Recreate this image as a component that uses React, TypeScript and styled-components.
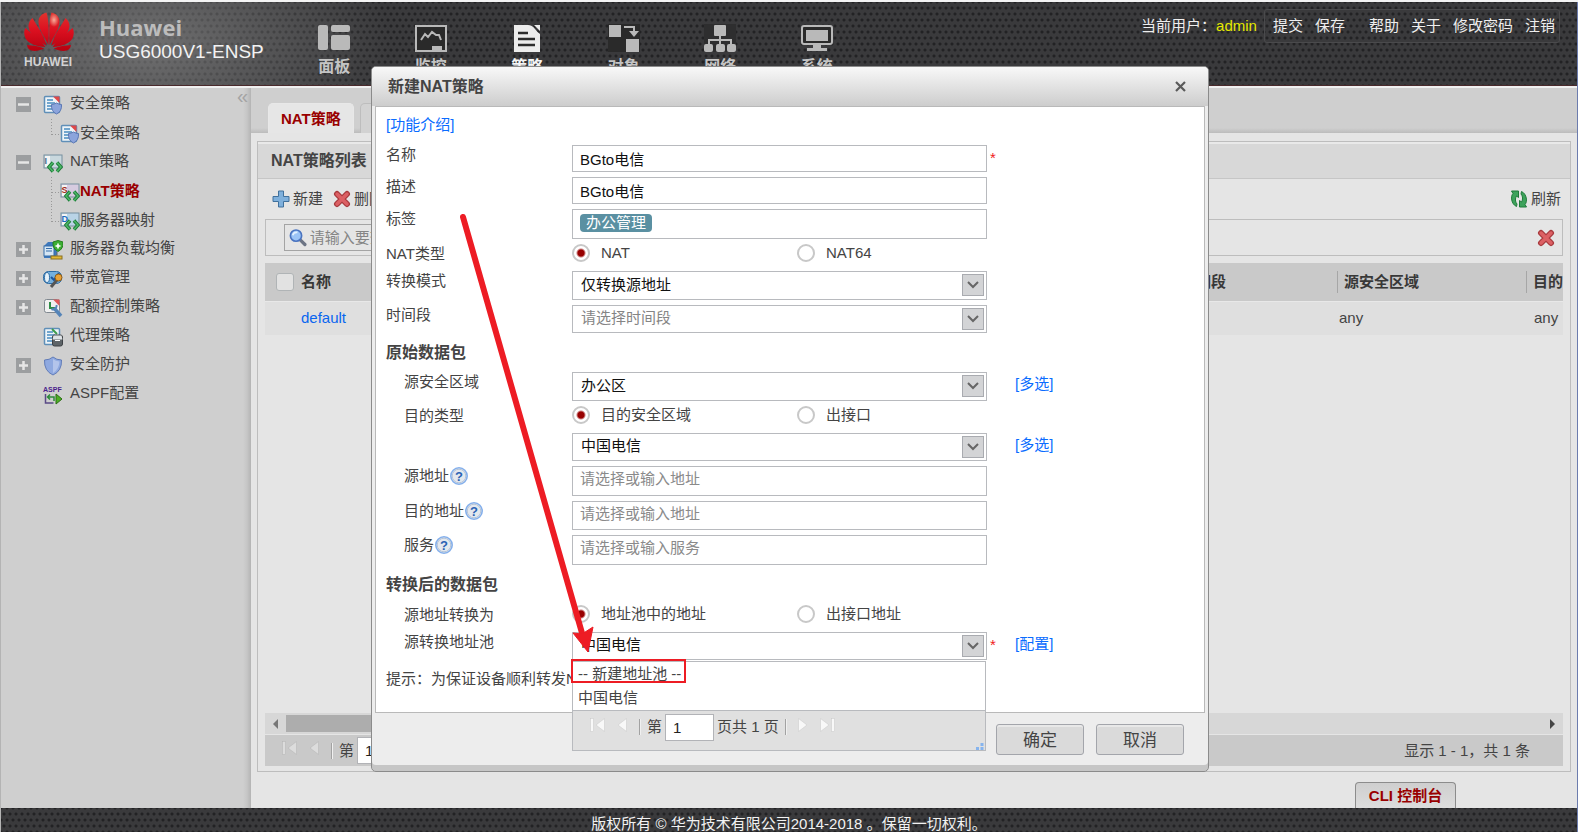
import React, { useState } from 'react';
import styled, { createGlobalStyle, css } from 'styled-components';

const GlobalStyle = createGlobalStyle`
  *, *::before, *::after { box-sizing: border-box; }
  body {
    margin: 0;
    background: #e5e5e5;
    color: #444;
    font: 15px/20px "Liberation Sans", "Noto Sans CJK SC", sans-serif;
  }
  button, input, select { font: inherit; color: inherit; margin: 0; }
  button { padding: 0; border: 0; background: none; cursor: pointer; }
  a { text-decoration: none; }
`;

const dots = css`
  background-image:
    radial-gradient(circle, #222224 1px, transparent 2px),
    radial-gradient(circle, #222224 1px, transparent 2px);
  background-size: 6px 12px;
  background-position: 0 0, 3px 6px;
`;

/* ---------- page frame ---------- */

const Page = styled.div`
  position: relative;
  display: flex;
  flex-direction: column;
  min-height: 100vh;
  border: solid #f4f4f4;
  border-width: 2px 0 0;
  box-shadow: inset 1px 0 #b4b4b4, inset -1px 0 #6c7cae;
`;

const Header = styled.header`
  display: flex;
  height: 84px;
  margin: 0 1px;
  padding-left: 23px;
  background-color: #3a3a3c;
  border-bottom: 1px solid #4a2a2c;
  background-image:
    radial-gradient(ellipse 250px 130px at 140px 50%, rgba(150, 150, 150, 0.6), transparent),
    radial-gradient(circle, #222224 1px, transparent 2px),
    radial-gradient(circle, #222224 1px, transparent 2px);
  background-size: 100% 100%, 6px 12px, 6px 12px;
  background-position: 0 0, 0 0, 3px 6px;
`;

const Brand = styled.div`
  display: flex;
  width: 262px;
  padding-top: 10px;
  gap: 24px;
`;

const Logo = styled.div`
  width: 51px;
  color: #d2d2d2;
  font-size: 12px;
  font-weight: bold;
  line-height: 14px;
  svg { display: block; }
`;

const Product = styled.div`
  padding-top: 2px;
  color: #f2f2f2;
  font-size: 19px;
  line-height: 24px;
  white-space: nowrap;
  strong {
    display: block;
    color: #bcbcbc;
    font: bold 22px/26px "Open Sans", sans-serif;
  }
`;

const MainNav = styled.nav`
  display: grid;
  grid-template-columns: repeat(6, 1fr);
  width: 579px;
  padding-top: 22px;
`;

const NavItem = styled.a<{ $active?: boolean }>`
  display: flex;
  flex-direction: column;
  align-items: center;
  gap: 3px;
  color: ${(p) => (p.$active ? '#f4f4f4' : '#c4c4c4')};
  font-size: 16px;
  font-weight: bold;
  line-height: 24px;
  svg { display: block; }
`;

const UserBar = styled.div`
  display: flex;
  align-items: flex-start;
  margin-left: auto;
  padding: 7px 17px 0 0;
  color: #eee;
  line-height: 34px;
  white-space: nowrap;
  em { margin: 0 7px 0 0; color: #e5e800; font-style: normal; }
`;

const UserLinks = styled.div`
  display: flex;
  height: 34px;
  padding: 0 4px 0 8px;
  gap: 12px;
  border: 1px solid #4a4a4c;
  border-radius: 3px;
  line-height: 32px;
  a { color: #eee; }
  a:nth-child(3) { margin-left: 12px; }
`;

const Main = styled.div`
  display: flex;
  flex: 1;
  margin: 0 1px;
  border-top: 2px solid #f0f0f0;
`;

const Footer = styled.footer`
  height: 24px;
  margin: 0 1px;
  padding-top: 7px;
  background-color: #3a3a3c;
  ${dots}
  color: #f2f2f2;
  line-height: 17px;
  text-align: center;
`;

/* ---------- sidebar ---------- */

const Sidebar = styled.aside`
  position: relative;
  width: 250px;
  flex: none;
  padding-top: 2px;
  background: linear-gradient(to left, #b4b4b4, #c6c6c6 4px, #cfcfcf 8px);
`;

const Collapse = styled.button`
  position: absolute;
  top: 0;
  right: 3px;
  color: #a4a4a4;
  font-size: 20px;
  line-height: 16px;
`;

const Tree = styled.ul`
  margin: 0;
  padding: 0;
  list-style: none;
`;

const TreeRow = styled.li<{ $sub?: boolean; $active?: boolean }>`
  display: flex;
  align-items: center;
  height: 29px;
  padding-left: ${(p) => (p.$sub ? 49 : 15)}px;
  svg { flex: none; }
  a {
    margin-left: ${(p) => (p.$sub ? 0 : 7)}px;
    padding-bottom: ${(p) => (p.$sub ? 2 : 4)}px;
    color: ${(p) => (p.$active ? '#990000' : '#444')};
    font-weight: ${(p) => (p.$active ? 'bold' : 'normal')};
  }
`;

const Toggle = styled.button<{ $hidden?: boolean }>`
  width: 15px;
  height: 15px;
  margin-right: 12px;
  background: #9c9ea0;
  visibility: ${(p) => (p.$hidden ? 'hidden' : 'visible')};
  svg { display: block; }
`;

/* ---------- content ---------- */

const Content = styled.main`
  display: flex;
  flex: 1;
  flex-direction: column;
  min-width: 0;
`;

const Tabs = styled.div`
  display: flex;
  align-items: flex-end;
  height: 45px;
  padding-left: 17px;
  gap: 6px;
  background: linear-gradient(to top, #bcbcbc, #cfcfcf 5px);
`;

const Tab = styled.button<{ $active?: boolean }>`
  height: 30px;
  padding: 0 12px;
  border: 1px solid ${(p) => (p.$active ? '#e8e8e8' : '#bdbdbd')};
  border-bottom: 0;
  border-radius: 5px 5px 0 0;
  background: ${(p) => (p.$active ? '#e6e6e6' : '#d2d2d2')};
  color: ${(p) => (p.$active ? '#990000' : '#444')};
  font-weight: bold;
`;

const Panel = styled.section`
  display: flex;
  flex: 1;
  flex-direction: column;
  margin: 8px 6px 0;
  border: 1px solid #bdbdbd;
  box-shadow: inset 0 2px #e9e9e9;
`;

const PanelTitle = styled.h2`
  margin: 2px 0 0;
  padding-left: 13px;
  border-bottom: 1px solid #c6c6c6;
  background: #d8d8d8;
  font-size: 16px;
  line-height: 34px;
`;

const PanelBody = styled.div`
  display: flex;
  flex: 1;
  flex-direction: column;
  padding: 0 7px 5px;
`;

const Toolbar = styled.div`
  display: flex;
  align-items: center;
  height: 40px;
  padding: 0 2px 0 7px;
  gap: 10px;
`;

const ToolButton = styled.button<{ $right?: boolean }>`
  display: flex;
  align-items: center;
  gap: 3px;
  margin-left: ${(p) => (p.$right ? 'auto' : 0)};
`;

const SearchRow = styled.div`
  display: flex;
  align-items: center;
  justify-content: space-between;
  height: 37px;
  margin-bottom: 7px;
  padding: 0 7px 0 18px;
  border: 1px solid #bdbdbd;
`;

const SearchBox = styled.label`
  display: flex;
  align-items: center;
  width: 300px;
  height: 27px;
  padding-left: 4px;
  gap: 1px;
  border: 1px solid #a4a4a4;
  input {
    width: 100%;
    border: 0;
    outline: 0;
    background: none;
  }
  input::placeholder { color: #858585; opacity: 1; }
`;

const GridArea = styled.div`
  flex: 1;
  overflow: hidden;
`;

const Grid = styled.table`
  width: calc(100% + 152px);
  border-collapse: collapse;
  table-layout: fixed;
  text-align: left;
  thead tr { height: 38px; background: #c9c9c9; border-bottom: 1px solid #e8e8e8; }
  tbody tr { height: 34px; background: #dfdfdf; }
  th { padding: 0; font-weight: bold; white-space: nowrap; color: #383838; }
  th:first-child { width: 36px; }
  th:nth-child(3) { width: 163px; }
  th:nth-child(n + 4) { width: 189px; }
  td { padding: 0 0 0 2px; }
  td:nth-child(2) { padding-left: 0; }
  td:last-child { padding-left: 8px; }
  a { color: #0a66f0; }
`;

const HeadCell = styled.div<{ $rule?: boolean }>`
  padding-left: ${(p) => (p.$rule ? 6 : 0)}px;
  border-left: ${(p) => (p.$rule ? '1px solid #a6a6a6' : '0')};
  line-height: 22px;
`;

const CheckBox = styled.input`
  display: block;
  appearance: none;
  width: 18px;
  height: 18px;
  margin-left: 11px;
  border: 1px solid #b0b4b6;
  border-radius: 3px;
  background: #e2e2e2;
`;

const ScrollTrack = styled.div`
  display: flex;
  align-items: center;
  height: 21px;
  margin-bottom: 1px;
  padding: 0 7px;
  background: #d7d7d7;
`;

const ScrollThumb = styled.div`
  width: 70%;
  height: 17px;
  margin: 0 auto 0 8px;
  background: #adadad;
`;

const Pager = styled.div<{ $inDialog?: boolean }>`
  display: flex;
  align-items: center;
  height: ${(p) => (p.$inDialog ? 32 : 31)}px;
  padding: 0 33px 0 17px;
  background: ${(p) => (p.$inDialog ? 'transparent' : '#c9c9c9')};
  white-space: nowrap;
  button { display: flex; margin-right: 12px; padding-bottom: 5px; }
`;

const Separator = styled.span<{ $after?: boolean }>`
  width: 2px;
  height: 16px;
  margin: ${(p) => (p.$after ? '0 11px 0 6px' : '0 6px 0 0')};
  border-left: 1px solid #a2a2a2;
  border-right: 1px solid #f0f0f0;
`;

const PageInput = styled.input`
  width: 49px;
  height: 27px;
  margin: 0 3px;
  padding: 0 7px;
  border: 1px solid #b2b3b7;
  background: #fff;
  color: #222;
`;

const Total = styled.span`
  margin-left: auto;
`;

const ConsoleBar = styled.div`
  display: flex;
  justify-content: flex-end;
  height: 36px;
  padding: 10px 121px 0 0;
`;

const ConsoleTab = styled.button`
  width: 101px;
  border: 1px solid #8c8c8c;
  border-bottom: 0;
  border-radius: 4px 4px 0 0;
  background: linear-gradient(#cfcfcf, #dcdcdc);
  color: #990000;
  font-weight: bold;
`;

/* ---------- dialog ---------- */

const Overlay = styled.div`
  position: absolute;
  inset: 64px 0 auto 2px;
  display: flex;
  justify-content: center;
  pointer-events: none;
`;

const Dialog = styled.section`
  position: relative;
  width: 838px;
  border: 1px solid #8b8b8b;
  border-radius: 5px;
  background: #ededed;
  box-shadow: inset 0 -6px #c6c6c6;
  pointer-events: auto;
`;

const DialogHead = styled.header`
  display: flex;
  align-items: center;
  justify-content: space-between;
  height: 39px;
  padding: 0 22px 0 16px;
  border-radius: 4px 4px 0 0;
  background: linear-gradient(#f8f8f8, #cdcdcd);
  h2 { margin: 0; font-size: 16px; }
  button { display: flex; }
`;

const DialogBody = styled.form`
  margin: 0 3px;
  padding: 0 0 19px 10px;
  border: 1px solid #b9b9b9;
  background: #fff;
`;

const Intro = styled.p`
  margin: 0;
  height: 38px;
  line-height: 36px;
`;

const BlueLink = styled.a`
  color: #0a6cff;
`;

const Row = styled.div<{ $h: number }>`
  display: grid;
  grid-template-columns: 186px 415px 28px auto;
  align-items: start;
  height: ${(p) => p.$h}px;
  margin-bottom: 5px;
  ${BlueLink} { line-height: 24px; }
`;

const Label = styled.label<{ $indent?: boolean }>`
  display: flex;
  align-items: center;
  padding-left: ${(p) => (p.$indent ? 18 : 0)}px;
  line-height: 20px;
`;

const SectionTitle = styled.h3<{ $h: number }>`
  height: ${(p) => p.$h}px;
  margin: 0 0 5px;
  font-size: 16px;
  line-height: 30px;
`;

const fieldBox = css`
  width: 100%;
  height: 100%;
  border: 1px solid #b8babe;
  border-radius: 0;
  background: #fff;
  color: #111;
`;

const TextField = styled.input<{ $raised?: boolean }>`
  ${fieldBox}
  padding: 0 7px ${(p) => (p.$raised ? 5 : 0)}px;
  &::placeholder { color: #8a8a8a; opacity: 1; }
`;

const TagField = styled.div`
  ${fieldBox}
  padding: 4px 7px;
`;

const Tag = styled.span`
  display: block;
  width: fit-content;
  height: 18px;
  padding: 0 6px;
  border-radius: 4px;
  background: #5a90a2;
  color: #fff;
  line-height: 17px;
`;

const SelectWrap = styled.div`
  position: relative;
  height: 100%;
`;

const SelectField = styled.select<{ $empty?: boolean }>`
  ${fieldBox}
  appearance: none;
  padding: 0 30px 2px 8px;
  color: ${(p) => (p.$empty ? '#858585' : '#111')};
`;

const Chevron = styled.span`
  position: absolute;
  top: 3px;
  right: 3px;
  display: flex;
  align-items: center;
  justify-content: center;
  width: 22px;
  height: 22px;
  border: 1px solid #a9abb0;
  background: #d3d4d6;
  pointer-events: none;
`;

const RadioGroup = styled.div`
  display: grid;
  grid-template-columns: 225px auto;
  label {
    display: flex;
    align-items: center;
    height: 18px;
    gap: 11px;
  }
`;

const RadioInput = styled.input`
  appearance: none;
  width: 18px;
  height: 18px;
  border: 2px solid #c8c8c8;
  border-radius: 50%;
  background: #fff;
  &:checked { background: radial-gradient(circle, #980000 3px, #fff 5px); }
`;

const Required = styled.span`
  padding: 3px 0 0 3px;
  color: #f02020;
  font-size: 15px;
`;

const Hint = styled.p`
  margin: 0;
  line-height: 28px;
`;

const Popup = styled.div`
  position: absolute;
  top: 29px;
  left: 0;
  right: 1px;
  border: 1px solid #b8babe;
  background: #e0e0e0;
`;

const Options = styled.ul`
  margin: 0;
  padding: 0;
  border-bottom: 1px solid #b8babe;
  background: #fff;
  list-style: none;
`;

const Option = styled.li<{ $marked?: boolean }>`
  position: relative;
  height: 24px;
  padding-left: 5px;
  line-height: 23px;
  ${(p) =>
    p.$marked &&
    css`
      &::after {
        content: "";
        position: absolute;
        top: -3px;
        left: -2px;
        width: 115px;
        height: 24px;
        border: 2px solid #ed1c24;
      }
    `}
`;

const Grip = styled.div`
  display: flex;
  align-items: flex-end;
  justify-content: flex-end;
  height: 7px;
  padding-right: 1px;
  svg { display: block; }
`;

const Actions = styled.footer`
  display: flex;
  justify-content: flex-end;
  height: 58px;
  padding: 11px 24px 0 0;
  gap: 12px;
`;

const ActionButton = styled.button`
  width: 88px;
  height: 31px;
  padding-top: 2px;
  border: 1px solid #a3a5ab;
  border-radius: 3px;
  background: #dadada;
  box-shadow: inset 0 2px #e8e8e8;
  font-size: 17px;
`;

const Pointer = styled.svg`
  position: absolute;
  top: 144px;
  left: 83px;
  pointer-events: none;
`;

/* ---------- drawings ---------- */

const HuaweiMark = () => {
  const half = (
    <>
      <path d="M24.400 33C20 24 14.500 17 14.500 9.500C14.500 5 18 1.500 22.500.5C25 8 25 22 24.400 33Z" />
      <path d="M22.600 33.500C14 29 5 22 4.500 14.500C4.300 11 6 8 8.500 6C13 14 20 23 22.600 33.500Z" />
      <path d="M21.300 35C13 34.500 4 32 1.300 26C-.3 22 0 18.500 1.500 16C8 22 17 27 21.300 35Z" />
      <path d="M20.200 36.500C15 39 8 40 5 37.200C3.800 36 3.200 34.500 3 33C9 33.500 15 34 20.200 36.500Z" />
    </>
  );
  return (
    <svg width="50" height="43" viewBox="0 0 50 43">
      <defs>
        <linearGradient id="petal" x1="0" y1="0" x2="0" y2="40" gradientUnits="userSpaceOnUse">
          <stop offset="0" stopColor="#e0342e" />
          <stop offset="0.450" stopColor="#dc1020" />
          <stop offset="1" stopColor="#b4000f" />
        </linearGradient>
        <radialGradient id="shine">
          <stop offset="0" stopColor="#ffd0b8" stopOpacity="0.800" />
          <stop offset="1" stopColor="#ffd0b8" stopOpacity="0" />
        </radialGradient>
      </defs>
      <g fill="url(#petal)">
        {half}
        <g transform="translate(50 0) scale(-1 1)">{half}</g>
      </g>
      <ellipse cx="30" cy="8" rx="5" ry="7" fill="url(#shine)" />
    </svg>
  );
};

const navIcons: Record<string, React.ReactNode> = {
  board: (
    <g fill="#b9b9b9">
      <rect x="0" y="1" width="10" height="25" rx="2" />
      <rect x="13" y="1" width="19" height="7" rx="2" />
      <rect x="13" y="11" width="19" height="15" rx="2" />
    </g>
  ),
  monitor: (
    <g fill="none" stroke="#b9b9b9" strokeWidth="2">
      <rect x="1" y="2" width="30" height="25" fill="#2a2a2a" />
      <path d="M6 16l4-6 3 3 4-5 4 3 3 0 2 5" />
      <path d="M18 26v-3h8v3z" fill="#b9b9b9" />
    </g>
  ),
  policy: (
    <>
      <path d="M3 1h14q4 0 7 4 3 4 5 5v18H3z" fill="#ececec" />
      <path d="M23 1h6v6z" fill="#ececec" />
      <path d="M7 9h10M7 15h17M7 21h17" stroke="#2c2c2c" strokeWidth="2.500" />
    </>
  ),
  object: (
    <g fill="#b9b9b9">
      <rect x="0" y="0" width="32" height="28" fill="#2a2a2a" />
      <rect x="1" y="1" width="12" height="12" />
      <rect x="18" y="15" width="13" height="13" />
      <path d="M16 3h10v6" fill="none" stroke="#b9b9b9" strokeWidth="2" />
      <path d="M21 7h10l-5 6z" />
    </g>
  ),
  network: (
    <g fill="#b9b9b9">
      <rect x="0" y="0" width="32" height="28" fill="#2e2e2f" />
      <rect x="10" y="1" width="12" height="11" rx="1" />
      <path d="M16 12v8M5 21v-5h22v5" fill="none" stroke="#b9b9b9" strokeWidth="2" />
      <rect x="0" y="20" width="9" height="8" rx="2" />
      <rect x="12" y="20" width="9" height="8" rx="2" />
      <rect x="23" y="20" width="9" height="8" rx="2" />
    </g>
  ),
  system: (
    <g fill="#b9b9b9">
      <rect x="1" y="2" width="30" height="18" rx="2" fill="#2a2a2a" stroke="#b9b9b9" strokeWidth="2" />
      <rect x="5" y="6" width="22" height="11" />
      <path d="M12 20h8v4h6v3H6v-3h6z" />
    </g>
  ),
};

const docBase = (
  <>
    <rect x="1.500" y="1.500" width="15" height="16" rx="1" fill="#eef4f8" stroke="#5f8fb8" strokeWidth="1.500" />
    <path d="M4 5h6M4 8h8M4 11h7M4 14h5" stroke="#4a8cc0" strokeWidth="1.300" />
  </>
);
const shieldSmall = (
  <path d="M8.500 9.500q2.500 0 5-1.500 2.500 1.500 5 1.500 .5 7-5 9.500-5.500-2.500-5-9.500z" fill="#8ba4dc" stroke="#5a76b4" />
);
const greenArrows = (
  <>
    <path d="M10 9.500l-4 4.500 4 4.500M14 9.500l4 4.500-4 4.500" fill="none" stroke="#1f7a38" strokeWidth="3.400" />
    <path d="M10 9.500l-4 4.500 4 4.500M14 9.500l4 4.500-4 4.500" fill="none" stroke="#4cb868" strokeWidth="1.500" />
  </>
);
const natBase = (letter: string, color: string, fill: string) => (
  <>
    <rect x="1" y="2" width="18" height="13" fill={fill} stroke="#76909f" />
    <rect x="2" y="3" width="5" height="11" fill="#f5f5f5" />
    <text x="1.500" y="11" fontSize="9" fontWeight="bold" fill={color}>{letter}</text>
    {greenArrows}
  </>
);

const treeIcons: Record<string, React.ReactNode> = {
  policy: (
    <>
      {docBase}
      <path d="M10 1.500h6.500V8z" fill="#e04848" />
      {shieldSmall}
    </>
  ),
  nat: natBase('I', '#4a6c90', '#c9d8de'),
  natS: natBase('S', '#a02c1c', '#d6cbe0'),
  natD: natBase('D', '#1c6cc0', '#b9d3e6'),
  server: (
    <>
      <path d="M1 6l4-4h9v13l-3 3H1z" fill="#3e78bc" />
      <rect x="1" y="6" width="10" height="10" fill="#d6e6f4" stroke="#356ca8" />
      <path d="M3 8.500h6M3 11h6" stroke="#356ca8" />
      <path d="M10 2l5-1.500L20 2q.5 7-5 9.500-5.500-2.500-5-9.500z" fill="#3cae32" stroke="#267c20" />
      <path d="M15 3.500v5M12.500 6h5" stroke="#fff" strokeWidth="1.600" />
      <path d="M14 12v4" stroke="#666" />
      <rect x="8" y="16" width="11" height="3" fill="#e2b934" stroke="#8a7020" />
    </>
  ),
  bandwidth: (
    <>
      <rect x="0.500" y="2.500" width="18" height="12" rx="5" fill="#74b0de" stroke="#2e6ca4" />
      <ellipse cx="4" cy="8.500" rx="2.500" ry="5" fill="#e6f2fa" stroke="#2e6ca4" />
      <path d="M8 8l3 3 5-7" fill="none" stroke="#1c549c" strokeWidth="2" />
      <path d="M8 18l6-7" stroke="#555" strokeWidth="3" />
      <circle cx="15.500" cy="8.500" r="3.500" fill="#e8a238" stroke="#8a5a18" />
    </>
  ),
  quota: (
    <>
      <rect x="1.500" y="1.500" width="15" height="13" rx="2" fill="#f0f0f0" stroke="#808890" />
      <path d="M10 1.500h6.500V8z" fill="#e05858" />
      <path d="M7 4v6h5" fill="none" stroke="#2e8c46" strokeWidth="2" />
      <path d="M11 10l7 8" stroke="#5584b8" strokeWidth="3.500" />
      <path d="M8.500 11a3.500 3.500 0 0 0 5-4" fill="none" stroke="#5584b8" strokeWidth="2" />
    </>
  ),
  proxy: (
    <>
      {docBase}
      <path d="M9 2l5 5" stroke="#3c9c4c" strokeWidth="2" />
      <rect x="9.500" y="8" width="10" height="11" rx="2" fill="#5e6468" stroke="#3c4044" />
      <path d="M10.500 8.500h8l1 4h-10z" fill="#dfe3e6" />
      <path d="M12 13.500h5" stroke="#fff" />
    </>
  ),
  shield: (
    <>
      <path d="M1.500 4q5 0 8.500-3 3.500 3 8.500 3 .5 11-8.500 15-9-4-8.500-15z" fill="#8fa9e0" stroke="#617cb8" />
      <path d="M10 3v14q6-3.500 6.500-11.500-4-.3-6.500-2.500z" fill="#c2d0f0" opacity="0.700" />
    </>
  ),
  aspf: (
    <>
      <text x="0" y="7" fontSize="7" fontWeight="bold" fill="#4b1f8c">ASPF</text>
      <path d="M2.500 9v9h8" fill="none" stroke="#5a4a86" strokeWidth="1.500" />
      <path d="M5 12h6v4M7 9.500L4.500 12 7 14.500" fill="none" stroke="#2c8a3a" strokeWidth="1.500" />
      <path d="M13 9l6 5-6 5z" fill="#4cb022" stroke="#2c6c16" />
    </>
  ),
};

const TreeIcon = ({ name }: { name: string }) => (
  <svg width="20" height="20" viewBox="0 0 20 20">{treeIcons[name]}</svg>
);

const Branch = ({ last }: { last?: boolean }) => (
  <svg width="10" height="29">
    <path d={`M1.500 0V${last ? 16 : 29}M2 15.500H10`} fill="none" stroke="#999" strokeDasharray="1 2" />
  </svg>
);

const CrossIcon = () => (
  <svg width="18" height="18" viewBox="0 0 18 18">
    <path d="M4 4l10 10M14 4L4 14" stroke="#a83a3e" strokeWidth="6" strokeLinecap="round" />
    <path d="M4 4l10 10M14 4L4 14" stroke="#dc6064" strokeWidth="3.500" strokeLinecap="round" />
  </svg>
);

const PlusIcon = () => (
  <svg width="18" height="18" viewBox="0 0 18 18">
    <path d="M6.500 1h5v5.500H17v5h-5.500V17h-5v-5.500H1v-5h5.500z" fill="#7fb0dc" stroke="#40709c" strokeLinejoin="round" />
  </svg>
);

const RefreshIcon = () => (
  <svg width="18" height="18" viewBox="0 0 18 18">
    <g fill="#3ea35c" stroke="#1f7a3a" strokeLinejoin="round">
      <path d="M6.500 16.500C1 14 .5 6 3 3.500L1.500 1h7v6.500L6.500 6C5 8 5 12 7 14z" />
      <path d="M11.500 1.500C17 4 17.500 12 15 14.500l1.500 2.500h-7v-6.500l2 1.500C13 10 13 6 11 4z" />
    </g>
  </svg>
);

const SearchIcon = () => (
  <svg width="19" height="19" viewBox="0 0 19 19">
    <path d="M12 12l5 5" stroke="#6c7484" strokeWidth="3.500" strokeLinecap="round" />
    <circle cx="7.500" cy="7.500" r="6" fill="#9cc4f6" stroke="#4a74c0" strokeWidth="1.800" />
    <path d="M4 7q1-3.500 5-3" stroke="#e4f2ff" strokeWidth="1.800" fill="none" />
  </svg>
);

const HelpIcon = () => (
  <svg width="20" height="20" viewBox="0 0 20 20">
    <circle cx="10" cy="10" r="8.200" fill="#e4e8ee" stroke="#85b0ec" strokeWidth="1.600" />
    <circle cx="10" cy="10" r="6.800" fill="none" stroke="#b4c4d8" />
    <text x="10" y="14.500" fontSize="13" fontWeight="bold" fill="#2a62b4" textAnchor="middle">?</text>
  </svg>
);

const StepIcon = ({ end, flip, light }: { end?: boolean; flip?: boolean; light?: boolean }) => (
  <svg width={end ? 15 : 10} height="14" viewBox={end ? '0 0 15 14' : '5 0 10 14'}>
    <g
      fill={light ? '#f8f8f8' : '#dcdcdc'}
      stroke={light ? '#c8c8c8' : '#b4b4b4'}
      strokeWidth="0.500"
      transform={flip ? `translate(${end ? 15 : 20} 0) scale(-1 1)` : undefined}
    >
      {end && <rect x="0.500" y="0.500" width="3" height="13" />}
      <path d="M14.500 0.500v13L6 7z" />
    </g>
  </svg>
);

const ScrollArrow = ({ right }: { right?: boolean }) => (
  <svg width="6" height="10" viewBox="0 0 6 10">
    <path d={right ? 'M0 0l5 5-5 5z' : 'M6 0L1 5l5 5z'} fill={right ? '#444' : '#777'} />
  </svg>
);

/* ---------- data ---------- */

const NAV = [
  ['board', '面板'],
  ['monitor', '监控'],
  ['policy', '策略'],
  ['object', '对象'],
  ['network', '网络'],
  ['system', '系统'],
];

type Node = { icon: string; text: string; toggle?: 'plus' | 'minus'; sub?: boolean; last?: boolean; active?: boolean };

const NODES: Node[] = [
  { icon: 'policy', text: '安全策略', toggle: 'minus' },
  { icon: 'policy', text: '安全策略', sub: true, last: true },
  { icon: 'nat', text: 'NAT策略', toggle: 'minus' },
  { icon: 'natS', text: 'NAT策略', sub: true, active: true },
  { icon: 'natD', text: '服务器映射', sub: true, last: true },
  { icon: 'server', text: '服务器负载均衡', toggle: 'plus' },
  { icon: 'bandwidth', text: '带宽管理', toggle: 'plus' },
  { icon: 'quota', text: '配额控制策略', toggle: 'plus' },
  { icon: 'proxy', text: '代理策略' },
  { icon: 'shield', text: '安全防护', toggle: 'plus' },
  { icon: 'aspf', text: 'ASPF配置' },
];

/* ---------- form parts ---------- */

type RowProps = {
  id: string;
  h: number;
  label?: string;
  indent?: boolean;
  help?: boolean;
  required?: boolean;
  link?: string;
  children: React.ReactNode;
};

const FormRow = ({ id, h, label, indent, help, required, link, children }: RowProps) => (
  <Row $h={h}>
    <Label htmlFor={id} $indent={indent}>
      {label}
      {help && <HelpIcon />}
    </Label>
    {children}
    {required ? <Required>*</Required> : <span />}
    {link && <BlueLink href="#">{link}</BlueLink>}
  </Row>
);

type SelectProps = { id: string; value: string; empty?: boolean; label?: string; children?: React.ReactNode };

const Select = ({ id, value, empty, label, children }: SelectProps) => (
  <SelectWrap>
    <SelectField id={id} $empty={empty} aria-label={label}>
      <option>{value}</option>
    </SelectField>
    <Chevron>
      <svg width="12" height="8" viewBox="0 0 12 8">
        <path d="M1 1l5 5 5-5" fill="none" stroke="#666" strokeWidth="2" />
      </svg>
    </Chevron>
    {children}
  </SelectWrap>
);

const Radios = ({ id, options }: { id: string; options: [string, string] }) => {
  const [picked, setPicked] = useState(0);
  return (
    <RadioGroup>
      {options.map((text, i) => (
        <label key={text}>
          <RadioInput
            type="radio"
            id={i === 0 ? id : `${id}-${i}`}
            name={id}
            checked={picked === i}
            onChange={() => setPicked(i)}
          />
          {text}
        </label>
      ))}
    </RadioGroup>
  );
};

const PagerStart = ({ light }: { light?: boolean }) => (
  <>
    <button type="button" aria-label="首页"><StepIcon end light={light} /></button>
    <button type="button" aria-label="上一页"><StepIcon light={light} /></button>
    <Separator />
    第
    <PageInput defaultValue="1" aria-label="页码" />
    页共 1 页
  </>
);

const NatDialog = () => (
  <Overlay>
    <Dialog role="dialog" aria-labelledby="dialog-title">
      <DialogHead>
        <h2 id="dialog-title">新建NAT策略</h2>
        <button type="button" aria-label="关闭">
          <svg width="11" height="11" viewBox="0 0 11 11">
            <path d="M1 1l9 9M10 1l-9 9" stroke="#5a5a5a" strokeWidth="2.200" />
          </svg>
        </button>
      </DialogHead>
      <DialogBody>
        <Intro><BlueLink href="#">[功能介绍]</BlueLink></Intro>
        <FormRow id="name" h={27} label="名称" required>
          <TextField id="name" defaultValue="BGto电信" />
        </FormRow>
        <FormRow id="desc" h={27} label="描述">
          <TextField id="desc" defaultValue="BGto电信" />
        </FormRow>
        <FormRow id="tags" h={30} label="标签">
          <TagField id="tags"><Tag>办公管理</Tag></TagField>
        </FormRow>
        <FormRow id="nat-type" h={22} label="NAT类型">
          <Radios id="nat-type" options={['NAT', 'NAT64']} />
        </FormRow>
        <FormRow id="mode" h={29} label="转换模式">
          <Select id="mode" value="仅转换源地址" />
        </FormRow>
        <FormRow id="time" h={28} label="时间段">
          <Select id="time" value="请选择时间段" empty />
        </FormRow>
        <SectionTitle $h={29}>原始数据包</SectionTitle>
        <FormRow id="src-zone" h={29} label="源安全区域" indent link="[多选]">
          <Select id="src-zone" value="办公区" />
        </FormRow>
        <FormRow id="dst-type" h={22} label="目的类型" indent>
          <Radios id="dst-type" options={['目的安全区域', '出接口']} />
        </FormRow>
        <FormRow id="dst-zone" h={28} link="[多选]">
          <Select id="dst-zone" value="中国电信" label="目的安全区域" />
        </FormRow>
        <FormRow id="src-addr" h={30} label="源地址" indent help>
          <TextField id="src-addr" placeholder="请选择或输入地址" $raised />
        </FormRow>
        <FormRow id="dst-addr" h={29} label="目的地址" indent help>
          <TextField id="dst-addr" placeholder="请选择或输入地址" $raised />
        </FormRow>
        <FormRow id="service" h={30} label="服务" indent help>
          <TextField id="service" placeholder="请选择或输入服务" $raised />
        </FormRow>
        <SectionTitle $h={30}>转换后的数据包</SectionTitle>
        <FormRow id="src-to" h={22} label="源地址转换为" indent>
          <Radios id="src-to" options={['地址池中的地址', '出接口地址']} />
        </FormRow>
        <FormRow id="pool" h={28} label="源转换地址池" indent required link="[配置]">
          <Select id="pool" value="中国电信">
            <Popup>
              <Options>
                <Option $marked>-- 新建地址池 --</Option>
                <Option>中国电信</Option>
              </Options>
              <Pager $inDialog>
                <PagerStart light />
                <Separator $after />
                <button type="button" aria-label="下一页"><StepIcon flip light /></button>
                <button type="button" aria-label="末页"><StepIcon end flip light /></button>
              </Pager>
              <Grip>
                <svg width="8" height="7" viewBox="0 0 8 7" fill="#86b4ee">
                  <path d="M4.500 0h3v3h-3zM0 4h3v3H0zM4.500 4h3v3h-3z" />
                </svg>
              </Grip>
            </Popup>
          </Select>
        </FormRow>
        <Hint>提示：为保证设备顺利转发NAT业务</Hint>
      </DialogBody>
      <Actions>
        <ActionButton type="button">确定</ActionButton>
        <ActionButton type="button">取消</ActionButton>
      </Actions>
      <Pointer width="146" height="446" viewBox="0 0 146 446">
        <path d="M8 6L127 422" stroke="#ed1c24" strokeWidth="6" strokeLinecap="round" />
        <path d="M133 441L118 422l9 1 11-7z" fill="#ed1c24" stroke="#ed1c24" />
      </Pointer>
    </Dialog>
  </Overlay>
);

export default function App() {
  return (
    <>
      <GlobalStyle />
      <Page>
        <Header>
          <Brand>
            <Logo><HuaweiMark />HUAWEI</Logo>
            <Product><strong>Huawei</strong>USG6000V1-ENSP</Product>
          </Brand>
          <MainNav>
            {NAV.map(([icon, text]) => (
              <NavItem key={icon} href="#" $active={icon === 'policy'}>
                <svg width="32" height="28" viewBox="0 0 32 28">{navIcons[icon]}</svg>
                {text}
              </NavItem>
            ))}
          </MainNav>
          <UserBar>
            当前用户：<em>admin</em>
            <UserLinks>
              {['提交', '保存', '帮助', '关于', '修改密码', '注销'].map((t) => (
                <a key={t} href="#">{t}</a>
              ))}
            </UserLinks>
          </UserBar>
        </Header>

        <Main>
          <Sidebar>
            <Collapse aria-label="收起">«</Collapse>
            <Tree>
              {NODES.map((n, i) => (
                <TreeRow key={i} $sub={n.sub} $active={n.active}>
                  {n.sub ? (
                    <Branch last={n.last} />
                  ) : (
                    <Toggle $hidden={!n.toggle} aria-label="展开或收起">
                      <svg width="15" height="15">
                        <path d={n.toggle === 'plus' ? 'M3 7.500h9M7.500 3v9' : 'M2 7.500h11'} stroke="#e6e6e6" strokeWidth="2.500" />
                      </svg>
                    </Toggle>
                  )}
                  <TreeIcon name={n.icon} />
                  <a href="#">{n.text}</a>
                </TreeRow>
              ))}
            </Tree>
          </Sidebar>

          <Content>
            <Tabs>
              <Tab $active>NAT策略</Tab>
              <Tab>源转换地址池</Tab>
            </Tabs>
            <Panel>
              <PanelTitle>NAT策略列表</PanelTitle>
              <PanelBody>
                <Toolbar>
                  <ToolButton><PlusIcon />新建</ToolButton>
                  <ToolButton><CrossIcon />删除</ToolButton>
                  <ToolButton $right><RefreshIcon />刷新</ToolButton>
                </Toolbar>
                <SearchRow>
                  <SearchBox>
                    <SearchIcon />
                    <input placeholder="请输入要查询的内容" aria-label="查询" />
                  </SearchBox>
                  <ToolButton aria-label="清除"><CrossIcon /></ToolButton>
                </SearchRow>
                <GridArea>
                  <Grid>
                    <thead>
                      <tr>
                        <th><CheckBox type="checkbox" aria-label="全选" /></th>
                        <th><HeadCell>名称</HeadCell></th>
                        <th><HeadCell $rule>时间段</HeadCell></th>
                        <th><HeadCell $rule>源安全区域</HeadCell></th>
                        <th><HeadCell $rule>目的安全区域</HeadCell></th>
                      </tr>
                    </thead>
                    <tbody>
                      <tr>
                        <td />
                        <td><a href="#">default</a></td>
                        <td />
                        <td>any</td>
                        <td>any</td>
                      </tr>
                    </tbody>
                  </Grid>
                </GridArea>
                <ScrollTrack>
                  <ScrollArrow />
                  <ScrollThumb />
                  <ScrollArrow right />
                </ScrollTrack>
                <Pager>
                  <PagerStart />
                  <Total>显示 1 - 1，共 1 条</Total>
                </Pager>
              </PanelBody>
            </Panel>
            <ConsoleBar>
              <ConsoleTab>CLI 控制台</ConsoleTab>
            </ConsoleBar>
          </Content>
        </Main>
        <Footer>版权所有 © 华为技术有限公司2014-2018 。保留一切权利。</Footer>
        <NatDialog />
      </Page>
    </>
  );
}
